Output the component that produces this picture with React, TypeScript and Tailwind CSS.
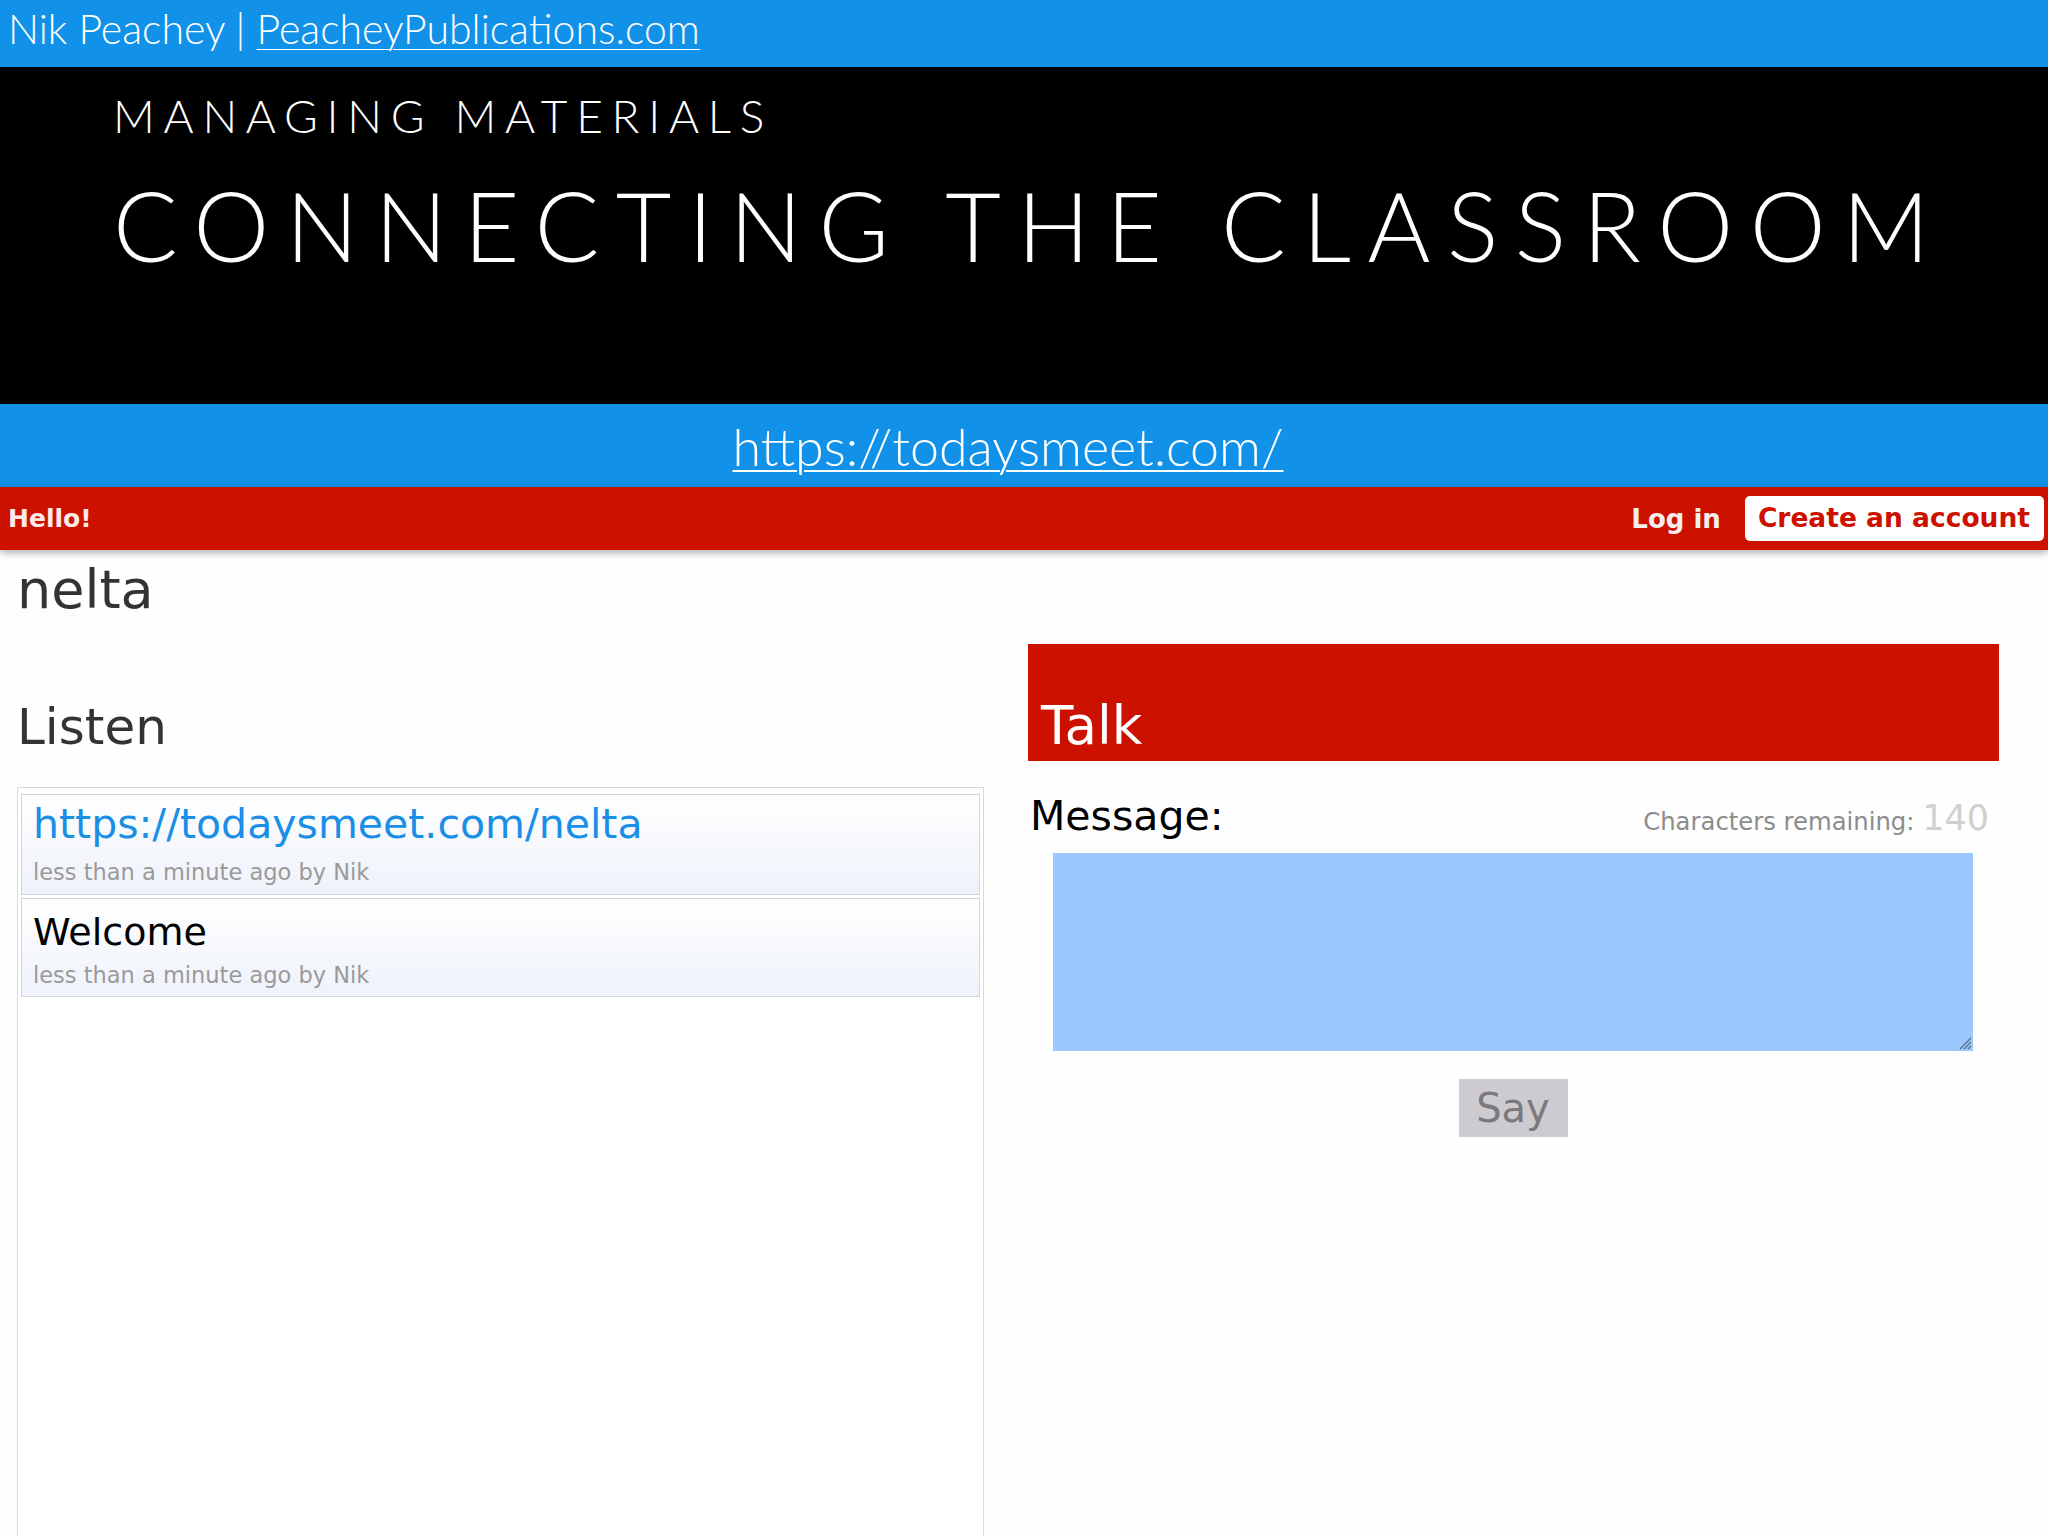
import React from "react";

const slideFont = { fontFamily: "Lato, 'Open Sans', sans-serif" };
const siteFont = { fontFamily: "'DejaVu Sans', Verdana, sans-serif" };

type Post = { text: string; link?: boolean; size: string; pt: string; gap: string };

const POSTS: Post[] = [
  { text: "https://todaysmeet.com/nelta", link: true, size: "text-[41px]", pt: "pt-[9px]", gap: "mt-[16px]" },
  { text: "Welcome", size: "text-[38px]", pt: "pt-[14px]", gap: "mt-[13px]" },
];

function ResizeGrip() {
  return (
    <svg width="16" height="16" viewBox="0 0 16 16" className="absolute bottom-[1px] right-[1px]">
      <path d="M15 4 L4 15 M15 8 L8 15 M15 12 L12 15" stroke="#5c6f86" strokeWidth="1.3" />
    </svg>
  );
}

export default function App() {
  return (
    <div className="flex h-screen flex-col overflow-hidden bg-[#fefefe]">
      {/* slide header */}
      <div className="flex h-[67px] shrink-0 items-start bg-[#1291e8] pl-[8px] pt-[8px]" style={slideFont}>
        <span className="text-[41px] font-light leading-none text-white">
          Nik Peachey |{" "}
          <span className="underline decoration-1 underline-offset-[5px]">PeacheyPublications.com</span>
        </span>
      </div>

      <div className="h-[337px] shrink-0 bg-black pl-[113px] pt-[26px] text-white" style={slideFont}>
        <div className="text-[46px] font-light leading-none tracking-[0.19em]">MANAGING MATERIALS</div>
        <div className="mt-[38px] whitespace-nowrap text-[96px] font-light leading-none tracking-[0.172em]">
          CONNECTING THE CLASSROOM
        </div>
      </div>

      <div className="flex h-[83px] shrink-0 items-center justify-center bg-[#1291e8] pr-[32px]" style={slideFont}>
        <span className="text-[52px] font-light leading-none text-white underline decoration-2 underline-offset-[4px]">
          https://todaysmeet.com/
        </span>
      </div>

      {/* todaysmeet page */}
      <div
        className="relative z-10 flex h-[63px] shrink-0 items-center justify-between bg-[#cc1100] pl-[8px] pr-[4px] shadow-[0_3px_7px_rgba(0,0,0,0.3)]"
        style={siteFont}
      >
        <span className="text-[25px] font-bold leading-none text-[#fbeaea]">Hello!</span>
        <div className="flex items-center gap-[24px]">
          <span className="text-[26px] font-bold leading-none text-[#f4eeee]">Log in</span>
          <span className="flex h-[45px] items-center rounded-[5px] bg-white pl-[13px] pr-[14px] text-[26.5px] font-bold leading-none text-[#cc1100]">
            Create an account
          </span>
        </div>
      </div>

      <div className="flex-1" style={siteFont}>
        <h1 className="mt-[13px] pl-[17px] text-[54px] leading-none text-[#333]">nelta</h1>

        <div className="mt-[27px] grid grid-cols-[967px_971px] gap-[44px] pl-[17px]">
          <div className="flex flex-col">
            <h2 className="mt-[58px] text-[50px] leading-none text-[#333]">Listen</h2>
            <div className="mt-[35px] h-[800px] border border-[#d9d9db] bg-white px-[3px] pt-[6px]">
              {POSTS.map((p) => (
                <div
                  key={p.text}
                  className={`mb-[3px] border border-[#d4d4d8] bg-linear-to-b from-white to-[#eef2fa] pl-[11px] pb-[10px] ${p.pt}`}
                >
                  <div className={`${p.size} leading-none ${p.link ? "text-[#1b8fe6]" : "text-black"}`}>{p.text}</div>
                  <div className={`${p.gap} text-[22.5px] leading-none text-[#9a9a9a]`}>less than a minute ago by Nik</div>
                </div>
              ))}
            </div>
          </div>

          <div className="flex flex-col">
            <div className="flex h-[117px] items-end bg-[#cc1100] pb-[9px] pl-[13px]">
              <h2 className="text-[53px] leading-none text-white">Talk</h2>
            </div>
            <div className="mt-[35px] flex items-baseline justify-between pl-[2px] pr-[10px]">
              <span className="text-[41px] leading-none text-black">Message:</span>
              <span className="text-[24.3px] leading-none text-[#8c8c8c]">
                Characters remaining: <span className="text-[35px] text-[#d0d0d0]">140</span>
              </span>
            </div>
            <div className="ml-[25px] mr-[26px] mt-[16px] flex flex-col items-center">
              <div className="relative h-[198px] w-full bg-[#99c9fe]">
                <ResizeGrip />
              </div>
              <button className="mt-[28px] flex h-[58px] w-[109px] items-center justify-center bg-[#cdcbcf] text-[40px] leading-none text-[#7a7a7c]">
                Say
              </button>
            </div>
          </div>
        </div>
      </div>
    </div>
  );
}
